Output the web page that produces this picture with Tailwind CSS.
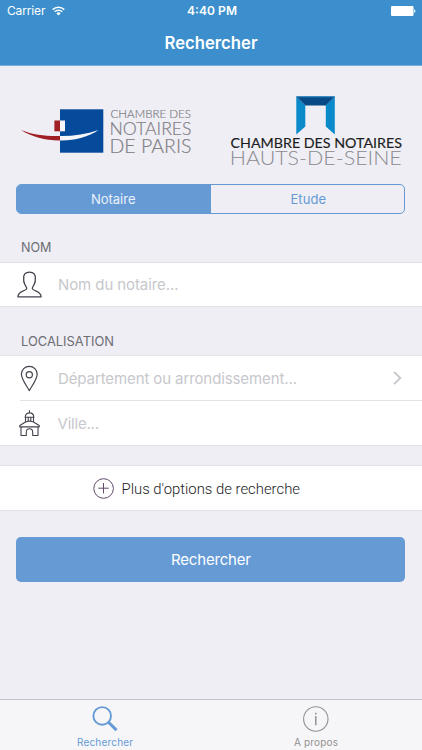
<!DOCTYPE html>
<html lang="fr">
<head>
  <meta charset="UTF-8" />
  <meta name="viewport" content="width=device-width, initial-scale=1.0"/>
  <title>Rechercher</title>
  <script src="https://cdn.jsdelivr.net/npm/@tailwindcss/browser@4"></script>
</head>
<body class="bg-[#efeef5] font-['Inter',sans-serif]">
  <div class="w-[422px] h-[750px] flex flex-col overflow-hidden">

    <!-- Status bar + title -->
    <header class="h-[66px] shrink-0 bg-[#3c8fcc] border-b border-[#78aedb] text-white">
      <div class="h-[22px] grid grid-cols-3 items-center pl-[7px] pr-1.5 text-[12px]">
        <div class="flex items-center gap-1.5">
          <svg class="w-[39px] h-[22px] overflow-visible" fill="currentColor"><text x="0" y="15" textLength="38.5" font-size="12">Carrier</text></svg>
          <svg class="w-[13px] h-[10px]" viewBox="0 0 13 10" fill="none" stroke="currentColor" stroke-width="1.5">
            <path d="M.7 3.6a8.2 8.2 0 0 1 11.6 0M2.7 5.8a5.4 5.4 0 0 1 7.6 0"/>
            <path d="M6.5 9.5 4.4 7.4a3 3 0 0 1 4.2 0z" fill="currentColor" stroke="none"/>
          </svg>
        </div>
        <svg class="w-[52px] h-[22px] justify-self-center overflow-visible" fill="currentColor"><text x="2" y="15" textLength="50" font-size="12" font-weight="600">4:40 PM</text></svg>
        <svg class="w-[25px] h-[10px] justify-self-end" viewBox="0 0 25 10" fill="currentColor">
          <rect width="22.5" height="10" rx="1"/><path d="M23.2 3.2c1.6.3 1.6 3.3 0 3.6z"/>
        </svg>
      </div>
      <h1 class="h-[43px]">
        <svg class="w-full h-full" fill="currentColor"><text x="164.5" y="27" textLength="93" lengthAdjust="spacingAndGlyphs" font-size="17" font-weight="600">Rechercher</text></svg>
      </h1>
    </header>

    <main class="flex-1 flex flex-col">
      <!-- Logos -->
      <div class="h-[118px] shrink-0 flex justify-between pl-5 pr-[19px]">
        <svg class="w-[174px] h-[118px]" viewBox="20 66 174 118">
          <rect x="60" y="109.3" width="43.3" height="43.4" fill="#064b9b"/>
          <rect x="54.4" y="120.5" width="5.6" height="10.8" fill="#a01f24"/>
          <rect x="60" y="120.5" width="5" height="10.8" fill="#f5f5fa"/>
          <path d="M21 130C34 135.2 47 136.4 60 136V140.4C46 140.6 32 137 21 130z" fill="#a01f24"/>
          <path d="M60 136C73 136.2 86 134.4 98.5 130 88 137.2 74 140.8 60 140.4z" fill="#f5f5fa"/>
          <g fill="#808085" font-family="Lato, sans-serif" font-weight="300" stroke="#808085" stroke-width=".2">
            <text x="110.5" y="117.6" font-size="11.6" textLength="80.5" lengthAdjust="spacingAndGlyphs">CHAMBRE DES</text>
            <text x="109.5" y="134.7" font-size="17.6" textLength="82" lengthAdjust="spacingAndGlyphs">NOTAIRES</text>
            <text x="109.5" y="153" font-size="19.4" textLength="82" lengthAdjust="spacingAndGlyphs">DE PARIS</text>
          </g>
        </svg>
        <svg class="w-[174px] h-[118px]" viewBox="229 66 174 118">
          <path d="M296.3 96.5V134.5L305.3 126.5V105.5zM334.8 96.5V134.5L325.8 126.5V105.5z" fill="#0b8acb"/>
          <path d="M296.3 96.5H334.8L325.8 105.5H305.3z" fill="#084a86"/>
          <path d="M296.3 97H334.8" stroke="#0b76b5"/>
          <g font-family="Lato, sans-serif">
            <text x="230.5" y="148" font-size="13.8" font-weight="400" fill="#1c1c20" stroke="#1c1c20" stroke-width=".15" textLength="171.5" lengthAdjust="spacingAndGlyphs">CHAMBRE DES NOTAIRES</text>
            <text x="229.8" y="165.4" font-size="19.4" font-weight="300" fill="#8a8a8f" textLength="172" lengthAdjust="spacingAndGlyphs">HAUTS-DE-SEINE</text>
          </g>
        </svg>
      </div>

      <!-- Segmented control -->
      <div class="h-[30px] shrink-0 ml-4 mr-[17px] flex border border-[#659ad5] rounded-[5px] overflow-hidden text-[#659ad5]">
        <button class="w-[194px] bg-[#659ad5] text-[#e9f1fa]">
          <svg class="w-full h-7" fill="currentColor"><text x="74" y="19" textLength="44.5" font-size="13">Notaire</text></svg>
        </button>
        <button class="flex-1">
          <svg class="w-full h-7" fill="currentColor"><text x="79.5" y="19" textLength="35.5" font-size="13">Etude</text></svg>
        </button>
      </div>

      <!-- Nom -->
      <svg class="w-full h-12 shrink-0" fill="#6d6d72"><text x="21" y="38" textLength="30.5" lengthAdjust="spacingAndGlyphs" font-size="13">NOM</text></svg>
      <div class="h-[45px] shrink-0 flex items-center bg-white border-y border-[#e2e1e8]">
        <svg class="w-[25px] h-[27px] ml-[17px]" viewBox="0 0 25 27" fill="none" stroke="#42434d" stroke-width="1.3" stroke-linejoin="round">
          <path d="M.9 25.8C1.2 22.5 2.6 21.4 5.4 20.3 8 19.3 9.5 18.8 9.7 17.5 9.8 16.3 8.6 15.2 7.8 13.2 6.9 11.4 6.4 9.7 6.7 8 6.2 3.6 8.2 1.1 12.5 1.1S18.8 3.6 18.3 8C18.6 9.7 18.1 11.4 17.2 13.2 16.4 15.2 15.2 16.3 15.3 17.5 15.5 18.8 17 19.3 19.6 20.3 22.4 21.4 23.8 22.5 24.1 25.8z"/>
        </svg>
        <svg class="w-[300px] h-[43px] ml-4" fill="#c7c7cc"><text x="0" y="27" textLength="120.5" font-size="15">Nom du notaire...</text></svg>
      </div>

      <!-- Localisation -->
      <svg class="w-full h-12 shrink-0" fill="#6d6d72"><text x="21" y="38.5" textLength="93" lengthAdjust="spacingAndGlyphs" font-size="13">LOCALISATION</text></svg>
      <div class="h-[91px] shrink-0 bg-white border-y border-[#e2e1e8]">
        <div class="h-11 flex items-center">
          <svg class="w-[19px] h-[27px] ml-5" viewBox="0 0 19 27" fill="none" stroke="#42434d" stroke-width="1.2" stroke-linejoin="round">
            <path d="M9.3 25.6C6.4 20.4 1.4 14 1.4 9.2a7.9 7.9 0 0 1 15.8 0C17.2 14 12.2 20.4 9.3 25.6z"/>
            <circle cx="9.3" cy="9.8" r="3.1"/>
          </svg>
          <svg class="w-[300px] h-11 ml-[19px]" fill="#c7c7cc"><text x="0" y="27.5" textLength="239" font-size="15">Département ou arrondissement...</text></svg>
          <svg class="w-[9px] h-[14px] ml-[35px]" viewBox="0 0 9 14" fill="none" stroke="#c7c7cc" stroke-width="1.9"><path d="M1 .9 7.3 7 1 13.1"/></svg>
        </div>
        <div class="h-[45px] ml-5 border-t border-[#e4e3e9] flex items-center">
          <svg class="w-[21px] h-[27px] -ml-px" viewBox="0 0 21 27" fill="none" stroke="#42434d" stroke-width="1.1" stroke-linejoin="round">
            <path d="M10.5 .3V3M6.3 7C6.3 4.3 8 2.9 10.5 2.9s4.2 1.4 4.2 4.1M5.6 7.2h9.8M6.5 7.4v4.6M9.2 7.4v3.8M11.8 7.4v3.8M14.5 7.4v4.6"/>
            <path d="M.8 15.5 6.5 12 10.5 11 14.5 12 20.2 15.5v1.4H.8zM2 16.9v8.6h5.3v-3.4c0-4.4 6.4-4.4 6.4 0v3.4H19v-8.6"/>
          </svg>
          <svg class="w-[300px] h-[43px] ml-[18px]" fill="#c7c7cc"><text x="-.5" y="26.5" textLength="41.5" font-size="15">Ville...</text></svg>
        </div>
      </div>

      <!-- Plus d'options -->
      <div class="h-[46px] shrink-0 mt-[19px] flex items-center bg-white border-y border-[#e2e1e8]">
        <svg class="w-[21px] h-[21px] ml-[93px]" viewBox="0 0 21 21" fill="none" stroke="#5f4a68" stroke-width="1">
          <circle cx="10.6" cy="10.5" r="9.8"/><path d="M5.3 10.2h10.4M10.5 5v10.4"/>
        </svg>
        <svg class="w-[220px] h-11 ml-2" fill="#1c1c1e"><text x="-.5" y="28" textLength="178.5" lengthAdjust="spacingAndGlyphs" font-family="Roboto, sans-serif" font-size="15.5" font-weight="300">Plus d'options de recherche</text></svg>
      </div>

      <button class="h-[45px] shrink-0 mt-[26px] ml-4 mr-[17px] rounded-[5px] bg-[#659ad5] text-white">
        <svg class="w-full h-[45px]" fill="currentColor"><text x="155" y="28" textLength="80" font-size="15">Rechercher</text></svg>
      </button>
    </main>

    <!-- Tab bar -->
    <nav class="h-[51px] shrink-0 grid grid-cols-2 bg-[#f6f6f8] border-t border-[#c4c3c9]">
      <a class="flex flex-col items-center pr-0.5 text-[#659ad5]">
        <svg class="w-[26px] h-[27px] mt-1.5" viewBox="0 0 26 27" fill="none" stroke="currentColor">
          <circle cx="10.2" cy="9.9" r="8.8" stroke-width="1.9"/>
          <path d="m16.5 16.3 8 7.8" stroke-width="3"/>
        </svg>
        <svg class="w-[56px] h-[17px]" fill="currentColor"><text x="0" y="13" textLength="56" font-size="10">Rechercher</text></svg>
      </a>
      <a class="flex flex-col items-center pr-0.5 text-[#929292]">
        <svg class="w-[26px] h-[27px] mt-1.5" viewBox="0 0 26 27" fill="none" stroke="currentColor">
          <circle cx="12.8" cy="13" r="12.2" stroke-width="1.1"/>
          <path d="M12.8 10v9.2M12.8 6.8v1.7" stroke-width="1.5"/>
        </svg>
        <svg class="w-[44px] h-[17px]" fill="currentColor"><text x="0" y="13" textLength="44" font-size="10">A propos</text></svg>
      </a>
    </nav>
  </div>
</body>
</html>
